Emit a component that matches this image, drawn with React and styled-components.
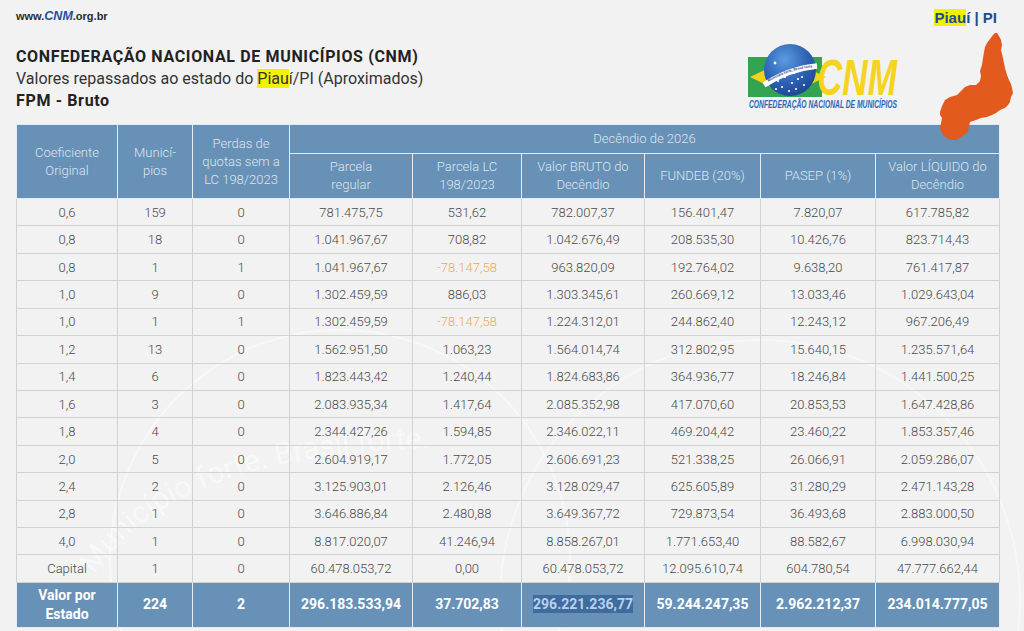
import React from "react";
import styled, { createGlobalStyle } from "styled-components";

const Global = createGlobalStyle`
  html, body { margin: 0; padding: 0; background: #f2f2f2; }
  body { font-family: Roboto, "Liberation Sans", Arial, sans-serif; overflow: hidden; }
  * { box-sizing: border-box; }
`;

const Page = styled.div`
  position: relative;
  width: 1024px;
  height: 631px;
  padding: 8px 0 0 16px;
  overflow: hidden;
`;

const Content = styled.div`
  position: relative;
  width: 984px;
  z-index: 1;
`;

const TopBar = styled.div`
  display: flex;
  justify-content: space-between;
  align-items: center;
  height: 16px;
  padding-right: 3px;
`;

const Site = styled.div`
  font-family: "Liberation Sans", Arial, sans-serif;
  font-size: 11px;
  font-weight: 700;
  color: #2b2b2b;
`;

const SiteBrand = styled.span`
  color: #1f4f9f;
  font-style: italic;
  font-size: 12.5px;
  font-weight: 900;
`;

const StateTag = styled.div`
  font-family: "Liberation Sans", Arial, sans-serif;
  font-size: 15px;
  font-weight: 700;
  color: #1d4b8e;
  margin-top: 2px;
`;

const Mark = styled.span`
  background: #f2f200;
`;

const HeadRow = styled.div`
  display: flex;
  justify-content: space-between;
  align-items: flex-start;
  margin-top: 22px;
  padding-right: 100px;
`;

const TitleBlock = styled.div`
  display: flex;
  flex-direction: column;
  color: #222;
  font-size: 16px;
  line-height: 22px;
`;

const TitleStrong = styled.div`
  font-weight: 700;
  letter-spacing: 0.65px;
`;

const TitleLight = styled.div`
  font-weight: 400;
  color: #333;
`;

const LogoBox = styled.div`
  margin-top: -3px;
  width: 152px;
  height: 70px;
  svg { overflow: visible; }
`;

const MapBox = styled.div`
  position: absolute;
  left: 936px;
  top: 30px;
  width: 80px;
  height: 115px;
  z-index: 3;
`;

const Watermark = styled.svg`
  position: absolute;
  left: 0;
  top: 0;
  z-index: 0;
  pointer-events: none;
`;

const Table = styled.table`
  margin-top: 11px;
  width: 983px;
  border-collapse: collapse;
  table-layout: fixed;
  font-family: Roboto, "Liberation Sans", Arial, sans-serif;
  text-align: center;
`;

const HeadCell = styled.th`
  background: #6791b6;
  color: #dfe6ee;
  font-weight: 300;
  font-size: 13px;
  line-height: 18px;
  border: 1px solid #e4ebf2;
  padding: 0 4px;
  height: ${(p) => p.$h || "auto"};
  vertical-align: middle;
`;

const BodyRow = styled.tr`
  height: 27.43px;
`;

const Cell = styled.td`
  border: 1px solid #d2d2d2;
  color: ${(p) => (p.$neg ? "#f6a74c" : "#4a4a4a")};
  font-weight: 300;
  font-size: 13px;
  padding: 0 4px;
  white-space: nowrap;
`;

const TotalRow = styled.tr`
  height: 45px;
`;

const TotalCell = styled.td`
  background: #6791b6;
  border: 1px solid #e4ebf2;
  color: #ffffff;
  font-weight: 700;
  font-size: 14px;
  line-height: 19px;
  padding: 0 4px;
  white-space: nowrap;
`;

const Selected = styled.span`
  background: #3f6c9e;
  color: #b9d1ea;
  padding: 1px 0;
`;

const rows = [
  ["0,6", "159", "0", "781.475,75", "531,62", "782.007,37", "156.401,47", "7.820,07", "617.785,82"],
  ["0,8", "18", "0", "1.041.967,67", "708,82", "1.042.676,49", "208.535,30", "10.426,76", "823.714,43"],
  ["0,8", "1", "1", "1.041.967,67", "-78.147,58", "963.820,09", "192.764,02", "9.638,20", "761.417,87"],
  ["1,0", "9", "0", "1.302.459,59", "886,03", "1.303.345,61", "260.669,12", "13.033,46", "1.029.643,04"],
  ["1,0", "1", "1", "1.302.459,59", "-78.147,58", "1.224.312,01", "244.862,40", "12.243,12", "967.206,49"],
  ["1,2", "13", "0", "1.562.951,50", "1.063,23", "1.564.014,74", "312.802,95", "15.640,15", "1.235.571,64"],
  ["1,4", "6", "0", "1.823.443,42", "1.240,44", "1.824.683,86", "364.936,77", "18.246,84", "1.441.500,25"],
  ["1,6", "3", "0", "2.083.935,34", "1.417,64", "2.085.352,98", "417.070,60", "20.853,53", "1.647.428,86"],
  ["1,8", "4", "0", "2.344.427,26", "1.594,85", "2.346.022,11", "469.204,42", "23.460,22", "1.853.357,46"],
  ["2,0", "5", "0", "2.604.919,17", "1.772,05", "2.606.691,23", "521.338,25", "26.066,91", "2.059.286,07"],
  ["2,4", "2", "0", "3.125.903,01", "2.126,46", "3.128.029,47", "625.605,89", "31.280,29", "2.471.143,28"],
  ["2,8", "1", "0", "3.646.886,84", "2.480,88", "3.649.367,72", "729.873,54", "36.493,68", "2.883.000,50"],
  ["4,0", "1", "0", "8.817.020,07", "41.246,94", "8.858.267,01", "1.771.653,40", "88.582,67", "6.998.030,94"],
  ["Capital", "1", "0", "60.478.053,72", "0,00", "60.478.053,72", "12.095.610,74", "604.780,54", "47.777.662,44"],
];

const widths = [101, 75, 97, 123, 109, 123, 116, 115, 124];

function Logo() {
  const stars = [
    [30, 38], [37, 34], [44, 40], [50, 36], [56, 42], [34, 44], [48, 46], [41, 48], [28, 46], [54, 34], [46, 30],
  ];
  return (
    <svg width="152" height="70" viewBox="0 0 152 70">
      <defs>
        <radialGradient id="globe" cx="0.4" cy="0.3" r="0.8">
          <stop offset="0" stopColor="#5b9be0" />
          <stop offset="0.55" stopColor="#2d62b4" />
          <stop offset="1" stopColor="#1b3f8c" />
        </radialGradient>
        <path id="band" d="M17 41 Q40 26 68 24" />
      </defs>
      <rect x="0" y="14" width="74" height="40" fill="#33a352" />
      <polygon points="2,34 40,16 78,34 40,52" fill="#f3d21c" />
      <circle cx="42" cy="27" r="26" fill="url(#globe)" />
      <path d="M16 42 Q40 26 69 23" stroke="#ffffff" strokeWidth="5.5" fill="none" />
      <text fontSize="3.6" fill="#1d3f8a" fontWeight="700" fontFamily="Liberation Sans, Arial, sans-serif">
        <textPath href="#band" startOffset="4">Município forte, Brasil forte</textPath>
      </text>
      {stars.map(([x, y], i) => (
        <circle key={i} cx={x} cy={y} r="1.1" fill="#ffffff" />
      ))}
      <circle cx="27" cy="20" r="1.4" fill="#ffffff" />
      <text
        x="69"
        y="52"
        fontSize="50"
        fontWeight="700"
        fontStyle="italic"
        fill="#f6d31d"
        fontFamily="Liberation Sans, Arial, sans-serif"
        textLength="80"
        lengthAdjust="spacingAndGlyphs"
      >
        CNM
      </text>
      <text
        x="1"
        y="65"
        fontSize="10.5"
        fontWeight="700"
        fontStyle="italic"
        fill="#2a67b4"
        fontFamily="Liberation Sans, Arial, sans-serif"
        textLength="148"
        lengthAdjust="spacingAndGlyphs"
      >
        CONFEDERAÇÃO NACIONAL DE MUNICÍPIOS
      </text>
    </svg>
  );
}

function PiauiMap() {
  const pts = [
    [61, 3], [63, 6], [65, 10], [66, 15], [65, 20], [66, 24], [67, 28], [68, 33], [69, 38], [71, 45],
    [73, 50], [75, 54], [76, 58], [77, 63], [75, 67], [74, 72], [72, 75], [69, 78], [64, 80], [60, 83],
    [56, 85], [51, 87], [45, 88], [40, 90], [34, 92], [33, 96], [32, 102], [28, 105], [24, 108], [20, 110],
    [16, 110], [12, 109], [7, 105], [5, 101], [4, 98], [5, 93], [6, 88], [4, 85], [4, 82], [6, 76],
    [9, 70], [14, 67], [21, 65], [25, 61], [29, 57], [34, 55], [40, 55], [44, 51], [45, 46], [44, 41],
    [46, 35], [47, 28], [48, 22], [49, 17], [51, 13], [54, 9], [57, 5], [59, 3],
  ];
  return (
    <svg width="80" height="115" viewBox="0 0 80 115">
      <polygon points={pts.map((p) => p.join(",")).join(" ")} fill="#e35a1e" />
    </svg>
  );
}

export default function App() {
  return (
    <>
      <Global />
      <Page>
        <Watermark width="1024" height="631" viewBox="0 0 1024 631">
          <defs>
            <path id="wm" d="M95 575 Q170 455 430 448" />
          </defs>
          <circle cx="340" cy="560" r="230" fill="none" stroke="#ffffff" strokeWidth="2" opacity="0.45" />
          <circle cx="760" cy="600" r="260" fill="none" stroke="#ffffff" strokeWidth="2" opacity="0.4" />
          <text fontSize="30" fill="#ffffff" opacity="0.5" fontFamily="Roboto, sans-serif" fontWeight="400">
            <textPath href="#wm">Município forte. Brasil forte.</textPath>
          </text>
        </Watermark>
        <MapBox>
          <PiauiMap />
        </MapBox>
        <Content>
          <TopBar>
            <Site>
              www.<SiteBrand>CNM</SiteBrand>.org.br
            </Site>
            <StateTag>
              <Mark>Piau</Mark>í | PI
            </StateTag>
          </TopBar>
          <HeadRow>
            <TitleBlock>
              <TitleStrong>CONFEDERAÇÃO NACIONAL DE MUNICÍPIOS (CNM)</TitleStrong>
              <TitleLight>
                Valores repassados ao estado do <Mark>Piau</Mark>í/PI (Aproximados)
              </TitleLight>
              <TitleStrong>FPM - Bruto</TitleStrong>
            </TitleBlock>
            <LogoBox>
              <Logo />
            </LogoBox>
          </HeadRow>
          <Table>
            <colgroup>
              {widths.map((w, i) => (
                <col key={i} style={{ width: w }} />
              ))}
            </colgroup>
            <thead>
              <tr>
                <HeadCell rowSpan={2}>
                  Coeficiente
                  <br />
                  Original
                </HeadCell>
                <HeadCell rowSpan={2}>
                  Municí-
                  <br />
                  pios
                </HeadCell>
                <HeadCell rowSpan={2}>
                  Perdas de
                  <br />
                  quotas sem a
                  <br />
                  LC 198/2023
                </HeadCell>
                <HeadCell colSpan={6} $h="29px">
                  Decêndio de 2026
                </HeadCell>
              </tr>
              <tr>
                <HeadCell $h="45px">
                  Parcela
                  <br />
                  regular
                </HeadCell>
                <HeadCell>
                  Parcela LC
                  <br />
                  198/2023
                </HeadCell>
                <HeadCell>
                  Valor BRUTO do
                  <br />
                  Decêndio
                </HeadCell>
                <HeadCell>FUNDEB (20%)</HeadCell>
                <HeadCell>PASEP (1%)</HeadCell>
                <HeadCell>
                  Valor LÍQUIDO do
                  <br />
                  Decêndio
                </HeadCell>
              </tr>
            </thead>
            <tbody>
              {rows.map((r, i) => (
                <BodyRow key={i}>
                  {r.map((v, j) => (
                    <Cell key={j} $neg={v.startsWith("-")}>
                      {v}
                    </Cell>
                  ))}
                </BodyRow>
              ))}
              <TotalRow>
                <TotalCell>
                  Valor por
                  <br />
                  Estado
                </TotalCell>
                <TotalCell>224</TotalCell>
                <TotalCell>2</TotalCell>
                <TotalCell>296.183.533,94</TotalCell>
                <TotalCell>37.702,83</TotalCell>
                <TotalCell>
                  <Selected>296.221.236,77</Selected>
                </TotalCell>
                <TotalCell>59.244.247,35</TotalCell>
                <TotalCell>2.962.212,37</TotalCell>
                <TotalCell>234.014.777,05</TotalCell>
              </TotalRow>
            </tbody>
          </Table>
        </Content>
      </Page>
    </>
  );
}
